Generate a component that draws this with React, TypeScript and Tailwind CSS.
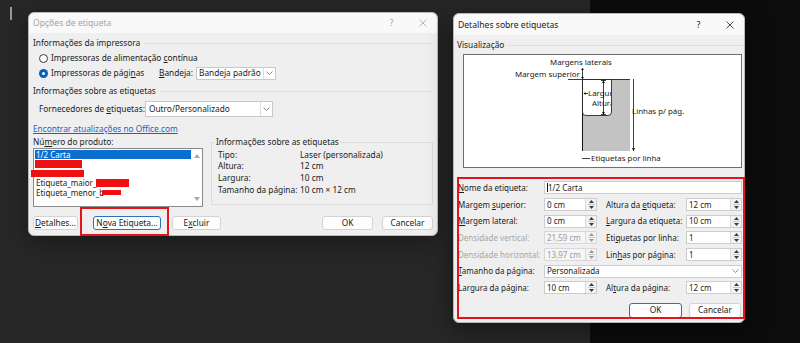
import React from "react";

const underlineKey = (before: string, key: string, after: string) => (
  <>
    {before}
    <span className="underline underline-offset-[1px]">{key}</span>
    {after}
  </>
);

function Chevron() {
  return (
    <svg width="7" height="4" viewBox="0 0 7 4">
      <path d="M0.5 0.5 L3.5 3.5 L6.5 0.5" fill="none" stroke="#6e6e6e" strokeWidth="0.8" />
    </svg>
  );
}

function Spin({ disabled }: { disabled?: boolean }) {
  const c = disabled ? "#9a9a9a" : "#3a3a3a";
  return (
    <div className="flex h-full w-[11px] flex-col items-center justify-center gap-[1px] border-l border-[#dadada] bg-[#f2f2f2]">
      <svg width="5" height="3" viewBox="0 0 5 3">
        <path d="M0 3 L2.5 0 L5 3Z" fill={c} />
      </svg>
      <div className="h-px w-[7px] bg-[#c9c9c9]" />
      <svg width="5" height="3" viewBox="0 0 5 3">
        <path d="M0 0 L2.5 3 L5 0Z" fill={c} />
      </svg>
    </div>
  );
}

function Header({ children }: { children: React.ReactNode }) {
  return (
    <div className="flex h-[14px] items-center">
      <span className="whitespace-nowrap">{children}</span>
      <div className="ml-[4px] h-px flex-1 bg-[#dedede]" />
    </div>
  );
}

function TitleBar({ title, active }: { title: string; active?: boolean }) {
  return (
    <div
      className={`flex items-center rounded-t-[6px] bg-[#f9f9f9] pl-[4px] ${
        active ? "h-[21px] text-[#1b1b1b]" : "h-[20px] text-[#a3a3a3]"
      }`}
    >
      <span className="text-[8.6px]">{title}</span>
      <span className={`ml-auto w-[33px] text-center text-[9px] ${active ? "text-[#222]" : "text-[#a3a3a3]"}`}>?</span>
      <span className="flex w-[29px] justify-center">
        <svg width="8" height="8" viewBox="0 0 8 8">
          <path d="M0.5 0.5 L7.5 7.5 M7.5 0.5 L0.5 7.5" stroke={active ? "#222" : "#a3a3a3"} strokeWidth="0.8" />
        </svg>
      </span>
    </div>
  );
}

function Button({
  children,
  w,
  focus,
  className = "",
}: {
  children: React.ReactNode;
  w: string;
  focus?: boolean;
  className?: string;
}) {
  return (
    <div
      className={`flex h-full items-center justify-center whitespace-nowrap rounded-[3px] bg-[#fdfdfd] ${w} ${
        focus ? "border border-[#2f6fb6] shadow-[inset_0_0_0_1px_#ffffff]" : "border border-[#d3d3d3]"
      } ${className}`}
    >
      {children}
    </div>
  );
}

function LabelOptions() {
  return (
    <div className="absolute left-[28px] top-[12px] h-[224px] w-[410px] rounded-[6px] border border-[#b8b8b8] bg-[#efefef] shadow-[0_6px_24px_rgba(0,0,0,0.35)]">
      <TitleBar title="Opções de etiqueta" />
      <div className="flex flex-col whitespace-nowrap px-[4px]">
        <div className="mt-[3px]">
          <Header>Informações da impressora</Header>
        </div>
        <div className="mt-[1px] flex h-[14px] items-center pl-[6px]">
          <div className="h-[9px] w-[9px] rounded-full border border-[#3c3c3c] bg-white" />
          <span className="ml-[3px]">{underlineKey("Impressoras de alimentação ", "c", "ontínua")}</span>
        </div>
        <div className="mt-[1px] flex h-[14px] items-center pl-[6px]">
          <div className="flex w-[120px] items-center">
            <div className="flex h-[9px] w-[9px] items-center justify-center rounded-full bg-[#0a5fb4]">
              <div className="h-[3px] w-[3px] rounded-full bg-white" />
            </div>
            <span className="ml-[3px]">{underlineKey("Impressoras de pági", "n", "as")}</span>
          </div>
          <span className="w-[37px]">{underlineKey("", "B", "andeja:")}</span>
          <div className="flex h-[13px] w-[80px] items-center border border-[#c9c9c9] bg-white">
            <span className="flex-1 pl-[2px]">Bandeja padrão</span>
            <div className="flex h-full w-[12px] items-center justify-center border-l border-[#dcdcdc]">
              <Chevron />
            </div>
          </div>
        </div>
        <div className="mt-[4px]">
          <Header>Informações sobre as etiquetas</Header>
        </div>
        <div className="mt-[3px] flex h-[16px] items-center pl-[6px]">
          <span className="w-[106px]">{underlineKey("Fornecedores de ", "e", "tiquetas:")}</span>
          <div className="flex h-[16px] w-[128px] items-center border border-[#c9c9c9] bg-white">
            <span className="flex-1 pl-[3px]">Outro/Personalizado</span>
            <div className="flex h-full w-[12px] items-center justify-center border-l border-[#dcdcdc]">
              <Chevron />
            </div>
          </div>
        </div>
        <div className="mt-[6px] flex h-[12px] items-center">
          <span className="text-[#1a62c4] underline underline-offset-[1px]">Encontrar atualizações no Office.com</span>
        </div>
        <div className="flex">
          <div className="flex w-[170px] flex-col">
            <div className="flex h-[13px] items-center">{underlineKey("Nú", "m", "ero do produto:")}</div>
            <div className="flex h-[59px] border border-[#8a8a8a] bg-white">
              <div className="flex flex-1 flex-col pl-[1px] pt-[1px] text-[8px] leading-[9px]">
                <div className="flex h-[9.4px] items-center bg-[#0a6fd0] pl-[1px] text-white">1/2 Carta</div>
                <div className="flex h-[9.4px] items-center">
                  <div className="h-[8px] w-[47px] bg-[#f01010]" />
                </div>
                <div className="-ml-[4px] flex h-[9.4px] items-center">
                  <div className="h-[7px] w-[53px] bg-[#f01010]" />
                </div>
                <div className="flex h-[9.4px] items-center pl-[1px]">
                  Etiqueta_maior_
                  <div className="h-[8px] w-[33px] bg-[#f01010]" />
                </div>
                <div className="flex h-[9.4px] items-center pl-[1px]">
                  Etiqueta_menor_b
                  <div className="-ml-[2px] h-[5px] w-[19px] bg-[#f01010]" />
                </div>
              </div>
              <div className="flex w-[11px] flex-col items-center justify-between py-[5px]">
                <svg width="6" height="4" viewBox="0 0 6 4">
                  <path d="M0 4 L3 0 L6 4Z" fill="#a8a8a8" />
                </svg>
                <svg width="6" height="4" viewBox="0 0 6 4">
                  <path d="M0 0 L3 4 L6 0Z" fill="#a8a8a8" />
                </svg>
              </div>
            </div>
          </div>
          <div className="relative ml-[8px] mt-[7px] h-[63px] flex-1 border border-[#dcdcdc] pl-[6px] pt-[6px]">
            <span className="absolute -top-[7px] left-[3px] bg-[#efefef] px-[1px] leading-[12px]">
              Informações sobre as etiquetas
            </span>
            {[
              ["Tipo:", "Laser (personalizada)"],
              ["Altura:", "12 cm"],
              ["Largura:", "10 cm"],
              ["Tamanho da página:", "10 cm × 12 cm"],
            ].map(([k, v]) => (
              <div key={k} className="flex h-[11.66px] items-center">
                <span className="w-[82px]">{k}</span>
                <span>{v}</span>
              </div>
            ))}
          </div>
        </div>
        <div className="mt-[9px] flex h-[14px] items-stretch">
          <Button w="w-[45px]">{underlineKey("", "D", "etalhes...")}</Button>
          <div className="relative ml-[15px] w-[68px]">
            <Button w="w-[68px]" focus>
              {underlineKey("N", "o", "va Etiqueta...")}
            </Button>
            <div className="absolute -bottom-[6px] -left-[13px] -right-[8px] -top-[9px] border-2 border-[#e3141c]" />
          </div>
          <Button w="w-[49px]" className="ml-[11px]">
            {underlineKey("E", "x", "cluir")}
          </Button>
          <Button w="w-[51px]" className="ml-auto">
            OK
          </Button>
          <Button w="w-[51px]" className="ml-[9px]">
            Cancelar
          </Button>
        </div>
      </div>
    </div>
  );
}

function Preview() {
  const clip = "labelClip";
  return (
    <svg width="277" height="112" viewBox="0 0 277 112" className="block">
      <defs>
        <clipPath id={clip}>
          <rect x="118" y="24" width="29" height="36" />
        </clipPath>
      </defs>
      <g fontFamily="'Noto Sans', sans-serif" fontSize="7.9" fill="#1a1a1a">
        <text x="86" y="10">Margens laterais</text>
        <text x="51" y="22">Margem superior</text>
        <text x="168" y="59">Linhas p/ pág.</text>
        <text x="127" y="106">Etiquetas por linha</text>
      </g>
      <rect x="118" y="24" width="48" height="72" fill="#c3c3c3" />
      <line x1="118.5" y1="24" x2="118.5" y2="96" stroke="#111" strokeWidth="1" />
      <line x1="104" y1="24.5" x2="166" y2="24.5" stroke="#111" strokeWidth="0.8" />
      <path d="M118.5 24.5 H147.5 V57 Q147.5 60.5 144 60.5 H122 Q118.5 60.5 118.5 57 Z" fill="#fff" stroke="#111" strokeWidth="0.8" />
      <g clipPath={`url(#${clip})`} fontFamily="'Noto Sans', sans-serif" fontSize="7.9" fill="#1a1a1a">
        <text x="124" y="41">Largura</text>
        <text x="128" y="51">Altura</text>
      </g>
      <line x1="118.5" y1="13" x2="118.5" y2="24" stroke="#111" strokeWidth="0.8" />
      <path d="M117 15 L118.5 13 L120 15Z M117 22 L118.5 24 L120 22Z" fill="#111" />
      <line x1="120" y1="38.5" x2="124" y2="38.5" stroke="#111" strokeWidth="0.8" />
      <path d="M121.5 37 L119.5 38.5 L121.5 40Z" fill="#111" />
      <line x1="139.5" y1="25" x2="139.5" y2="60" stroke="#111" strokeWidth="0.8" />
      <line x1="137" y1="25.5" x2="142" y2="25.5" stroke="#111" strokeWidth="0.8" />
      <line x1="137" y1="59.5" x2="142" y2="59.5" stroke="#111" strokeWidth="0.8" />
      <path d="M138 28 L139.5 25.5 L141 28Z M138 57 L139.5 59.5 L141 57Z" fill="#111" />
      <line x1="169.5" y1="24" x2="169.5" y2="96" stroke="#111" strokeWidth="0.8" />
      <path d="M168 93 L169.5 96 L171 93Z" fill="#111" />
      <line x1="118" y1="103.5" x2="126" y2="103.5" stroke="#111" strokeWidth="0.8" />
    </svg>
  );
}

function Field({
  value,
  w,
  disabled,
}: {
  value: string;
  w: string;
  disabled?: boolean;
}) {
  return (
    <div
      className={`flex h-[13px] items-stretch border ${w} ${
        disabled ? "border-[#d8d8d8] bg-[#f6f6f6] text-[#9b9b9b]" : "border-[#cdcdcd] bg-white"
      }`}
    >
      <span className="flex flex-1 items-center pl-[2px]">{value}</span>
      <Spin disabled={disabled} />
    </div>
  );
}

function Details() {
  const pairRows: [React.ReactNode, string, boolean, React.ReactNode, string][] = [
    [underlineKey("Margem ", "s", "uperior:"), "0 cm", false, underlineKey("Altura da ", "e", "tiqueta:"), "12 cm"],
    [underlineKey("", "M", "argem lateral:"), "0 cm", false, underlineKey("", "L", "argura da etiqueta:"), "10 cm"],
    ["Densidade vertical:", "21,59 cm", true, underlineKey("Eti", "q", "uetas por linha:"), "1"],
    ["Densidade horizontal:", "13,97 cm", true, underlineKey("Lin", "h", "as por página:"), "1"],
  ];
  const pair = (
    label: React.ReactNode,
    value: string,
    dis: boolean,
    label2: React.ReactNode,
    value2: string,
    key: string
  ) => (
    <div key={key} className="flex h-[16.67px] items-center">
      <span className={`w-[86px] overflow-hidden whitespace-nowrap ${dis ? "text-[#a6a6a6]" : ""}`}>{label}</span>
      <Field value={value} w="w-[53px]" disabled={dis} />
      <span className="ml-[9px] w-[80px] whitespace-nowrap">{label2}</span>
      <Field value={value2} w="w-[56px]" />
    </div>
  );
  return (
    <div className="absolute left-[453px] top-[13px] h-[310px] w-[292px] rounded-[6px] border border-[#b8b8b8] bg-[#efefef] shadow-[0_6px_24px_rgba(0,0,0,0.45)]">
      <TitleBar title="Detalhes sobre etiquetas" active />
      <div className="flex flex-col whitespace-nowrap">
        <div className="mt-[3px] pl-[3px]">
          <Header>Visualização</Header>
        </div>
        <div className="ml-[9px] mt-[2px] h-[114px] w-[279px] border border-[#6f6f6f] bg-white">
          <Preview />
        </div>
        <div className="mt-[11.67px] flex flex-col pl-[4px] text-[8px]">
          <div className="flex h-[16.67px] items-center">
            <span className="w-[86px]">{underlineKey("", "N", "ome da etiqueta:")}</span>
            <div className="flex h-[13px] w-[198px] items-center border border-[#cdcdcd] bg-white pl-[2px]">
              <span className="h-[9px] w-px bg-[#111]" />
              1/2 Carta
            </div>
          </div>
          {pairRows.map((r, i) => pair(r[0], r[1], r[2], r[3], r[4], String(i)))}
          <div className="flex h-[16.67px] items-center">
            <span className="w-[86px]">{underlineKey("", "T", "amanho da página:")}</span>
            <div className="flex h-[13px] w-[198px] items-center border border-[#cdcdcd] bg-white">
              <span className="flex-1 pl-[2px]">Personalizada</span>
              <div className="flex w-[12px] justify-center">
                <Chevron />
              </div>
            </div>
          </div>
          {pair(
            underlineKey("Largura da pá", "g", "ina:"),
            "10 cm",
            false,
            underlineKey("Al", "t", "ura da página:"),
            "12 cm",
            "last"
          )}
        </div>
        <div className="mt-[6.67px] flex h-[15px] justify-end pr-[3px]">
          <Button w="w-[53px]" focus>
            OK
          </Button>
          <Button w="w-[52px]" className="ml-[7px]">
            Cancelar
          </Button>
        </div>
      </div>
      <div className="absolute left-[3px] top-[163px] h-[142px] w-[288px] border-2 border-[#e3141c]" />
    </div>
  );
}

export default function App() {
  return (
    <div className="relative flex h-[343px] w-[800px] overflow-hidden font-['Noto_Sans',sans-serif] text-[8.3px] leading-[12px] text-[#1b1b1b]">
      <div className="h-full w-[590px] bg-[#272727]" />
      <div className="h-full flex-1 bg-[#0c0c0c]" />
      <div className="absolute left-[10px] top-[7px] h-[13px] w-[2px] bg-[#9a9a9a]" />
      <LabelOptions />
      <Details />
    </div>
  );
}
